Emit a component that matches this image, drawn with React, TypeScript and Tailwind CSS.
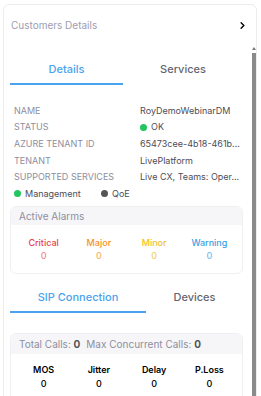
import { ChevronRight } from 'lucide-react';

const rows = [
  { label: 'NAME', value: 'RoyDemoWebinarDM' },
  { label: 'STATUS', value: 'OK', dot: true },
  { label: 'AZURE TENANT ID', value: '65473cee-4b18-461b...' },
  { label: 'TENANT', value: 'LivePlatform' },
  { label: 'SUPPORTED SERVICES', value: 'Live CX, Teams: Oper...' },
];

const alarms = [
  { label: 'Critical', color: 'text-[#e8424f]', value: 'text-[#f08a92]' },
  { label: 'Major', color: 'text-[#f5921e]', value: 'text-[#f7b26a]' },
  { label: 'Minor', color: 'text-[#f2c21b]', value: 'text-[#f5d263]' },
  { label: 'Warning', color: 'text-[#3c9ee5]', value: 'text-[#7cbcec]' },
];

const metrics = ['MOS', 'Jitter', 'Delay', 'P.Loss'];

const Tabs = ({ left, right, split }: { left: string; right: string; split: string }) => {
  return (
    <div className="flex h-[30px] text-[11px] font-medium">
      <div className={`${split} flex items-center justify-center border-b-2 border-[#4aa3ee] text-[#4aa3ee]`}>{left}</div>
      <div className="flex-1 flex items-center justify-center border-b-2 border-transparent text-[#65656f]">{right}</div>
    </div>
  );
};

export default function App() {
  return (
    <div className="w-[261px] h-[396px] overflow-hidden bg-white pt-[4px] pl-[3px] pr-[4px] font-['Inter',sans-serif]">
      <div className="h-[420px] border border-[#ececf0] rounded-md flex flex-col">
        <div className="h-[41px] flex items-center justify-between pl-[7px] pr-[8px]">
          <span className="text-[10px] text-[#9d9db2]">Customers Details</span>
          <ChevronRight size={11} strokeWidth={3} className="text-black" />
        </div>
        <div className="flex flex-1">
          <div className="flex-1 min-w-0 pl-[6px] pr-[9px] pt-[9px]">
            <Tabs left="Details" right="Services" split="w-[113px]" />
            <div className="pt-[17px] flex flex-col">
              {rows.map((r) => (
                <div key={r.label} className="h-[16.7px] flex items-center text-[9px] whitespace-nowrap">
                  <span className="w-[130px] shrink-0 pl-[4px] text-[#8e8e9e]">{r.label}</span>
                  <span className="flex items-center gap-[4px] text-[#4d4d58] overflow-hidden">
                    {r.dot && <span className="w-[7px] h-[7px] shrink-0 rounded-full bg-[#22c55e]" />}
                    {r.value}
                  </span>
                </div>
              ))}
              <div className="h-[16.7px] flex items-center text-[9px] text-[#4d4d58] pl-[4px] whitespace-nowrap">
                <span className="flex items-center gap-[4px] w-[87px]">
                  <span className="w-[7px] h-[7px] rounded-full bg-[#22c55e]" />
                  Management
                </span>
                <span className="flex items-center gap-[4px]">
                  <span className="w-[7px] h-[7px] rounded-full bg-[#555]" />
                  QoE
                </span>
              </div>
            </div>
            <div className="mt-[4px] border border-[#f0f0f3] rounded-md overflow-hidden">
              <div className="h-[18px] bg-[#f6f6f8] flex items-center pl-[8px] text-[10px] text-[#8e8e9e]">Active Alarms</div>
              <div className="grid grid-cols-4 px-[5px] pt-[12px] pb-[11px] text-[9px] leading-[12px] font-medium">
                {alarms.map((a) => (
                  <div key={a.label} className="flex flex-col items-center gap-[1px]">
                    <span className={a.color}>{a.label}</span>
                    <span className={a.value}>0</span>
                  </div>
                ))}
              </div>
            </div>
            <div className="pt-[9px]">
              <Tabs left="SIP Connection" right="Devices" split="w-[136px]" />
            </div>
            <div className="mt-[20px] border border-[#f0f0f3] rounded-md overflow-hidden">
              <div className="h-[20px] bg-[#f6f6f8] flex items-center pl-[8px] text-[10px] text-[#8e8e9e] gap-[6px] whitespace-nowrap">
                <span>
                  Total Calls: <b className="text-[#555]">0</b>
                </span>
                <span>
                  Max Concurrent Calls: <b className="text-[#555]">0</b>
                </span>
              </div>
              <div className="grid grid-cols-4 px-[5px] pt-[10px] pb-[10px] text-[9px] leading-[12px] font-semibold text-black">
                {metrics.map((m) => (
                  <div key={m} className="flex flex-col items-center gap-[2px]">
                    <span>{m}</span>
                    <span className="font-medium">0</span>
                  </div>
                ))}
              </div>
            </div>
          </div>
          <div className="w-[4px] flex flex-col items-center pt-[1px]">
            <span className="w-0 h-0 border-l-[2px] border-r-[2px] border-b-[3px] border-l-transparent border-r-transparent border-b-[#777]" />
            <span className="mt-[3px] w-[4px] flex-1 bg-[#8a8a8a]" />
          </div>
        </div>
      </div>
    </div>
  );
}
